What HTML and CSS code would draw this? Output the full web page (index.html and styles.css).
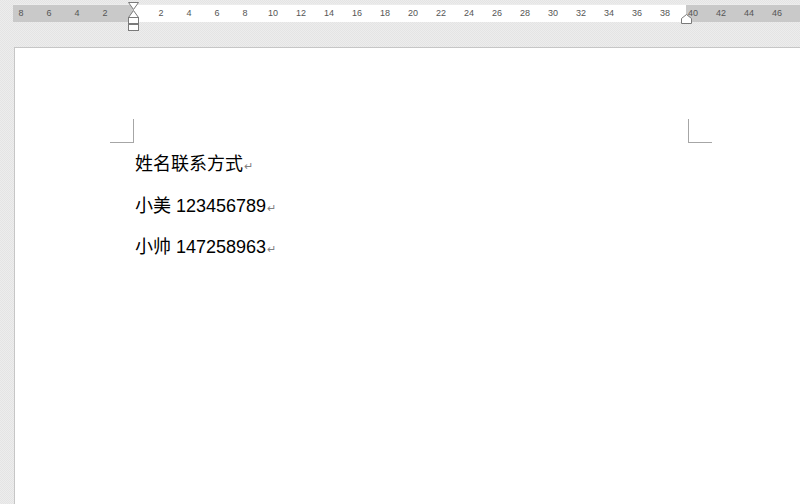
FILE: index.html
```html
<!DOCTYPE html>
<html>
<head>
<meta charset="utf-8">
<link rel="stylesheet" href="styles.css">
</head>
<body>
<div class="top">
  <div class="ruler">
    <div class="seg seg-left">
      <span class="n">8</span><span class="n">6</span><span class="n">4</span><span class="n">2</span>
    </div>
    <div class="seg seg-mid">
      <span class="n">2</span><span class="n">4</span><span class="n">6</span><span class="n">8</span><span class="n">10</span><span class="n">12</span><span class="n">14</span><span class="n">16</span><span class="n">18</span><span class="n">20</span><span class="n">22</span><span class="n">24</span><span class="n">26</span><span class="n">28</span><span class="n">30</span><span class="n">32</span><span class="n">34</span><span class="n">36</span><span class="n">38</span>
    </div>
    <div class="seg seg-right">
      <span class="n">40</span><span class="n">42</span><span class="n">44</span><span class="n">46</span>
    </div>
    <svg class="marker-left" width="13" height="30" viewBox="0 0 13 30">
      <path d="M1.5 0.5 H11.5 L6.5 7.5 Z" fill="#fff" stroke="#7a7a7a"/>
      <path d="M6.5 8.5 L11.5 15.5 H1.5 Z" fill="#fff" stroke="#7a7a7a"/>
      <rect x="1.5" y="15.5" width="10" height="6" fill="#fff" stroke="#7a7a7a"/>
      <rect x="1.5" y="22.5" width="10" height="6" fill="#fff" stroke="#7a7a7a"/>
    </svg>
    <svg class="marker-right" width="13" height="10" viewBox="0 0 13 10">
      <path d="M1.5 9.5 V4.5 L6.5 0.5 L11.5 4.5 V9.5 Z" fill="#fff" stroke="#7a7a7a"/>
    </svg>
  </div>
</div>
<div class="page">
  <span class="crop crop-left"></span>
  <span class="crop crop-right"></span>
  <div class="content">
    <p class="line">姓名联系方式<span class="pm">↵</span></p>
    <p class="line">小美 123456789<span class="pm">↵</span></p>
    <p class="line">小帅 147258963<span class="pm">↵</span></p>
  </div>
</div>
</body>
</html>
```
FILE: styles.css
```css
html, body {
  margin: 0;
  padding: 0;
}
body {
  width: 800px;
  height: 504px;
  overflow: hidden;
  background-color: #e4e4e4;
  background-image:
    linear-gradient(45deg, rgba(255,255,255,0.35) 25%, transparent 25%, transparent 75%, rgba(255,255,255,0.35) 75%),
    linear-gradient(45deg, rgba(255,255,255,0.35) 25%, transparent 25%, transparent 75%, rgba(255,255,255,0.35) 75%);
  background-size: 2px 2px;
  background-position: 0 0, 1px 1px;
  font-family: "Liberation Sans", "Noto Sans CJK SC", sans-serif;
}
.top {
  padding: 4px 0 0 13px;
  height: 47px;
  box-sizing: border-box;
}
.ruler {
  position: relative;
  display: flex;
  height: 17px;
  border-top: 1px solid #ececec;
}
.seg {
  display: flex;
  height: 17px;
  align-items: center;
  font-size: 9px;
  color: #555;
}
.seg-left {
  width: 120px;
  background: #c9c9c9;
}
.seg-left .n:first-child {
  margin-left: -6px;
}
.seg-mid {
  width: 553px;
  background: #fff;
  padding-left: 14px;
  box-sizing: border-box;
}
.seg-right {
  flex: 1;
  background: #c9c9c9;
}
.seg-right .n:first-child {
  margin-left: -7px;
}
.n {
  width: 28px;
  flex: none;
  text-align: center;
  line-height: 17px;
}
.marker-left {
  position: absolute;
  left: 114px;
  top: -3px;
}
.marker-right {
  position: absolute;
  left: 667px;
  top: 9px;
}
.page {
  position: relative;
  margin-left: 14px;
  height: 456px;
  background: #fff;
  border-left: 1px solid #c6c6c6;
  border-top: 1px solid #c6c6c6;
}
.crop {
  position: absolute;
  width: 23px;
  height: 23px;
  top: 71px;
  border-bottom: 1px solid #a6a6a6;
}
.crop-left {
  left: 95px;
  border-right: 1px solid #a6a6a6;
}
.crop-right {
  left: 673px;
  border-left: 1px solid #a6a6a6;
}
.content {
  padding: 96px 0 0 120px;
}
.line {
  margin: 0;
  height: 41.5px;
  font-size: 18px;
  line-height: 41.5px;
  color: #000;
  white-space: nowrap;
}
.pm {
  font-size: 11px;
  color: #808080;
  margin-left: 1px;
}
```
